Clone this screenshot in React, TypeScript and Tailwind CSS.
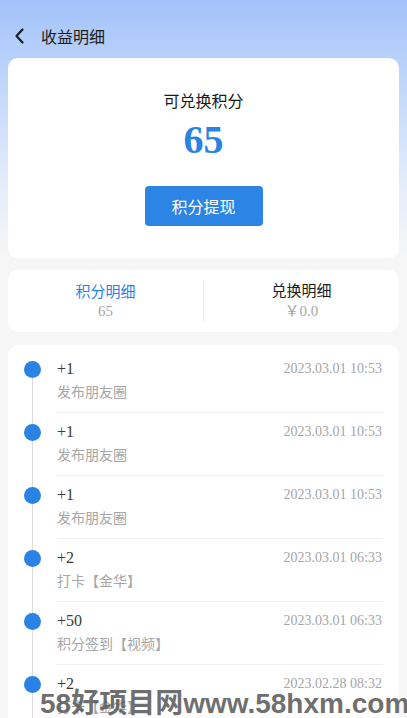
import React from "react";

const records = [
  { amount: "+1", time: "2023.03.01 10:53", title: "发布朋友圈" },
  { amount: "+1", time: "2023.03.01 10:53", title: "发布朋友圈" },
  { amount: "+1", time: "2023.03.01 10:53", title: "发布朋友圈" },
  { amount: "+2", time: "2023.03.01 06:33", title: "打卡【金华】" },
  { amount: "+50", time: "2023.03.01 06:33", title: "积分签到【视频】" },
  { amount: "+2", time: "2023.02.28 08:32", title: "打卡【金华】" },
  { amount: "+2", time: "2023.02.28 08:30", title: "打卡【金华】" },
];

export default function App() {
  return (
    <div className="relative min-h-screen overflow-hidden bg-[linear-gradient(180deg,#a3c3fa_0px,#dfeafb_170px,#f6f6f6_255px)] font-['Liberation_Serif','Noto_Sans_CJK_SC',serif]">
      {/* Header */}
      <div className="flex h-[58px] items-center pt-[14px]">
        <button className="ml-[12px] flex h-[22px] w-[14px] items-center justify-center">
          <svg width="11" height="16" viewBox="0 0 11 16" fill="none">
            <polyline
              points="8.5,1.5 2.5,8 8.5,14.5"
              stroke="#1f1f1f"
              strokeWidth="2.2"
              strokeLinecap="round"
              strokeLinejoin="round"
            />
          </svg>
        </button>
        <div className="ml-[15px] font-['Noto_Sans_CJK_SC',sans-serif] text-[16px] leading-[22px] text-[#1a1a1a]">
          收益明细
        </div>
      </div>

      {/* Points card */}
      <div className="mx-2 flex h-[200px] flex-col items-center rounded-[10px] bg-white pt-[31px]">
        <div className="font-['Noto_Sans_CJK_SC',sans-serif] text-[16px] leading-[22px] text-[#1a1a1a]">
          可兑换积分
        </div>
        <div className="mt-[7px] text-[40px] font-bold leading-[44px] text-[#2a82e4]">65</div>
        <button className="mt-[24px] h-[40px] w-[118px] rounded-[4px] bg-[#2c84e4] font-['Noto_Sans_CJK_SC',sans-serif] text-[16px] text-white">
          积分提现
        </button>
      </div>

      {/* Tabs */}
      <div className="mx-2 mt-3 flex h-[62px] items-center rounded-[10px] bg-white">
        <div className="flex flex-1 flex-col items-center">
          <div className="font-['Noto_Sans_CJK_SC',sans-serif] text-[15px] leading-[20px] text-[#2a82e4]">积分明细</div>
          <div className="text-[15px] leading-[20px] text-[#a6a6a6]">65</div>
        </div>
        <div className="h-[41px] w-px bg-[#ececec]" />
        <div className="flex flex-1 flex-col items-center">
          <div className="font-['Noto_Sans_CJK_SC',sans-serif] text-[15px] leading-[20px] text-[#1a1a1a]">兑换明细</div>
          <div className="text-[15px] leading-[22px] text-[#a6a6a6]">￥0.0</div>
        </div>
      </div>

      {/* Records */}
      <div className="mx-2 mt-[13px] rounded-t-[10px] bg-white pt-[5px]">
        {records.map((r, i) => (
          <div key={i} className="flex">
            <div className="flex w-[49px] flex-col items-center">
              <div className={`h-[11px] w-px ${i === 0 ? "" : "bg-[#dcdcdc]"}`} />
              <div className="h-[17px] w-[17px] rounded-full bg-[#2a82e4]" />
              <div className="w-px flex-1 bg-[#dcdcdc]" />
            </div>
            <div className="mr-[16px] flex-1 border-b border-[#f0f0f0] pt-[8px] pb-[11px]">
              <div className="flex items-center justify-between pr-[1px]">
                <span className="text-[16px] leading-[22px] text-[#3a3a3a]">{r.amount}</span>
                <span className="text-[14px] leading-[22px] text-[#a6a6a6]">{r.time}</span>
              </div>
              <div className="mt-px font-['Noto_Sans_CJK_SC',sans-serif] text-[14px] leading-[20px] text-[#a6a6a6]">
                {r.title}
              </div>
            </div>
          </div>
        ))}
      </div>

      {/* Watermark */}
      <div className="pointer-events-none absolute left-[40px] top-[687px] whitespace-nowrap font-['Liberation_Sans','Noto_Sans_CJK_SC',sans-serif] text-[28px] font-bold leading-[34px] text-[#555]/85">
        58好项目网www.58hxm.com
      </div>
    </div>
  );
}
